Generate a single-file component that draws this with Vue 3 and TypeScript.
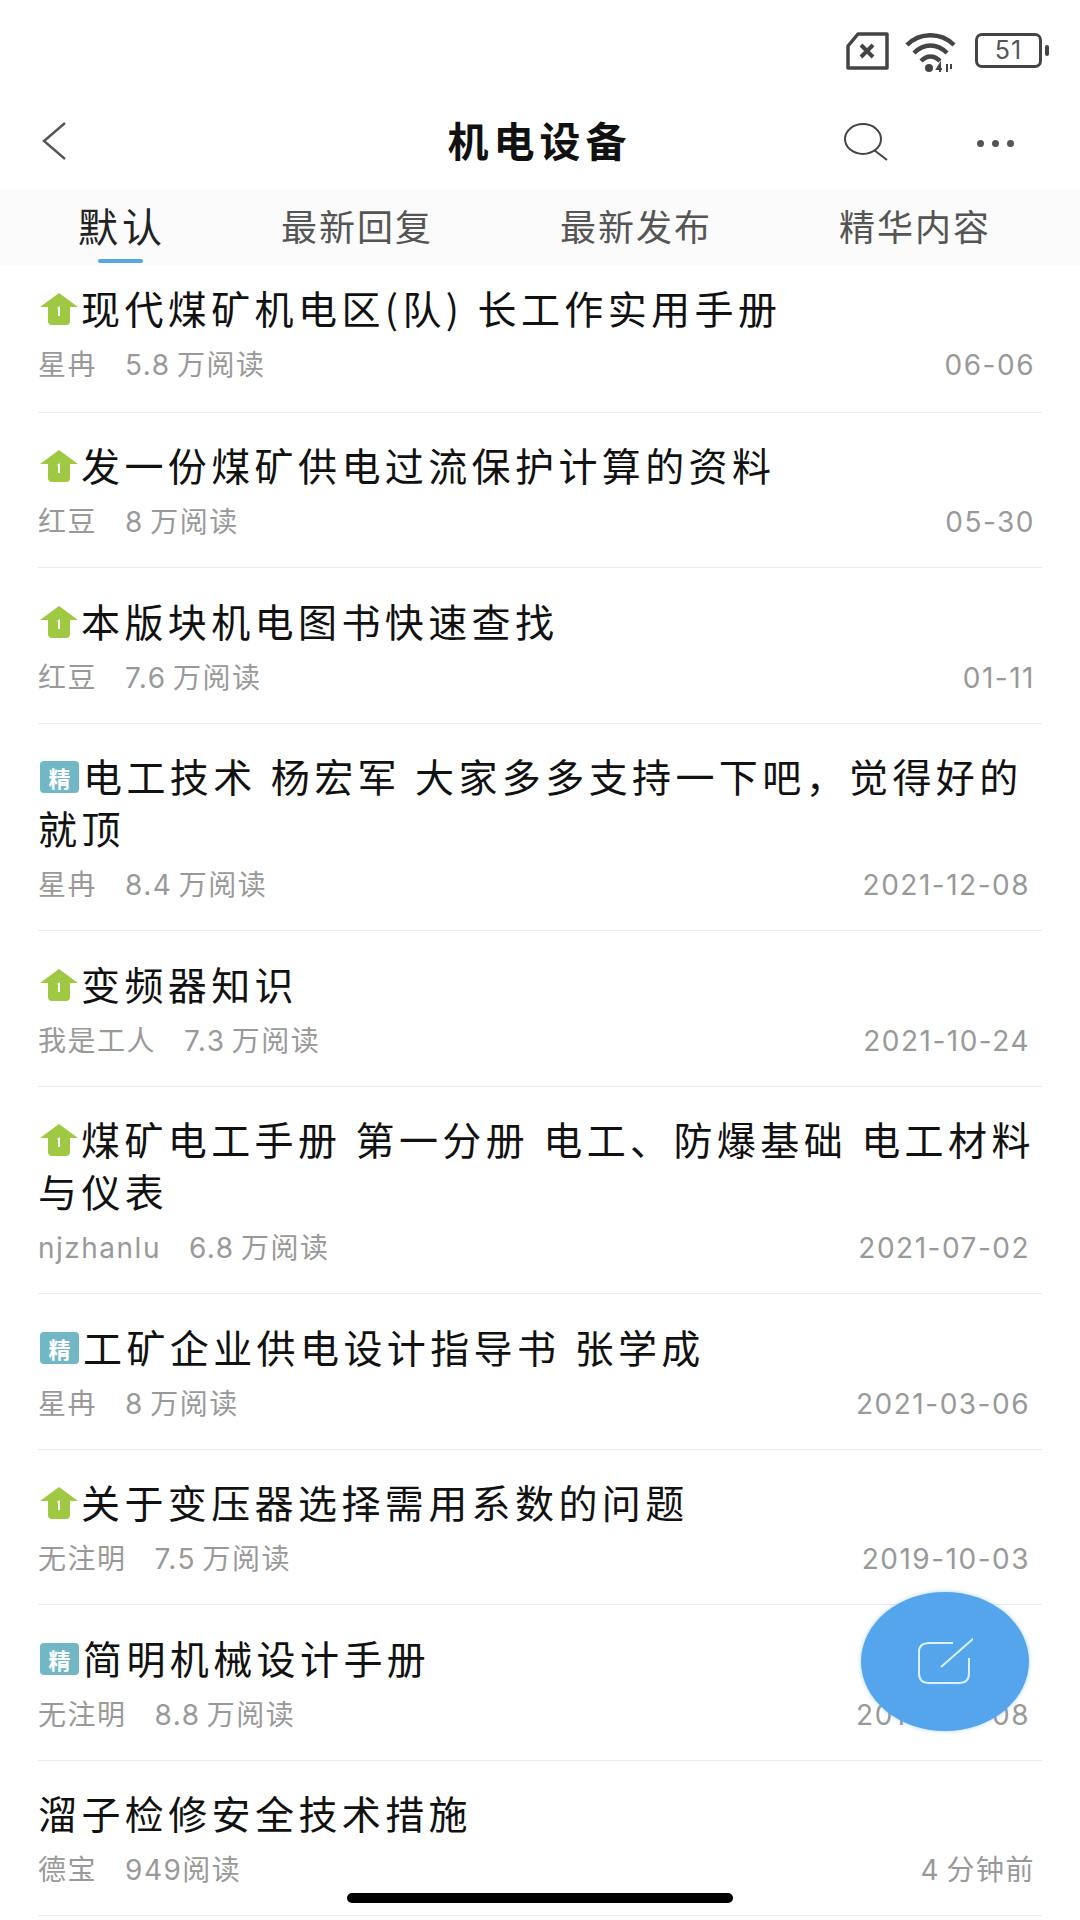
<template>
  <div class="page">
    <div class="status">
      <svg class="ic-sim" width="46" height="40" viewBox="0 0 46 40">
        <path d="M14 3H43V37H4V15Z" fill="none" stroke="#444" stroke-width="3.5" stroke-linejoin="round" />
        <path d="M17 14L29 26M29 14L17 26" stroke="#444" stroke-width="4" />
      </svg>
      <svg class="ic-wifi" width="54" height="44" viewBox="0 0 54 44">
        <path d="M3 14C16 1 37 1 50 14M10 22C20 12 33 12 43 22M17 30C23 24 30 24 36 30" fill="none" stroke="#444" stroke-width="4.5" />
        <circle cx="25" cy="37" r="4" fill="#444" />
        <path d="M36 41V33L33 38H38M43 33V41M47 33V38" fill="none" stroke="#444" stroke-width="2" />
      </svg>
      <div class="battery"><span class="battery-num">51</span></div>
      <span class="battery-tip"></span>
    </div>

    <header class="nav">
      <svg class="ic-back" width="30" height="40" viewBox="0 0 30 40">
        <path d="M25 2L4 20L25 38" fill="none" stroke="#555" stroke-width="2.4" />
      </svg>
      <h1 class="nav-title">机电设备</h1>
      <svg class="ic-search" width="48" height="44" viewBox="0 0 48 44">
        <ellipse cx="20" cy="17" rx="18" ry="15" fill="none" stroke="#444" stroke-width="2" />
        <path d="M31 28L44 38" stroke="#444" stroke-width="2" />
      </svg>
      <div class="dots"><i></i><i></i><i></i></div>
    </header>

    <nav class="tabs">
      <span class="tab active">默认</span>
      <span v-for="t in tabs" :key="t" class="tab">{{ t }}</span>
    </nav>

    <ul class="list">
      <li v-for="item in items" :key="item.title" class="row">
        <div class="title">
          <svg v-if="item.tag === 'top'" class="ic-top" width="38" height="32" viewBox="0 0 38 32">
            <path d="M19 0L38 14H30V28Q30 32 26 32H12Q8 32 8 28V14H0Z" fill="#9fc943" />
            <path d="M17 15L20 13V23H18V16Z" fill="#fff" />
          </svg>
          <span v-else-if="item.tag === 'best'" class="badge">精</span>{{ item.title }}
        </div>
        <div class="meta">
          <span class="author">{{ item.author }}</span>
          <span class="reads">{{ item.reads }}阅读</span>
          <span class="date" :class="{ short: item.date.length <= 5 }">{{ item.date }}</span>
        </div>
      </li>
    </ul>

    <button class="fab">
      <svg width="56" height="50" viewBox="0 0 56 50">
        <path d="M36 6H12Q2 6 2 15V36Q2 46 12 46H42Q52 46 52 36V21" fill="none" stroke="#d9f0ff" stroke-width="2" />
        <path d="M24 30L57 1" stroke="#d9f0ff" stroke-width="2" />
      </svg>
    </button>
    <div class="home-bar"></div>
  </div>
</template>

<script setup lang="ts">
interface Item {
  tag?: 'top' | 'best'
  title: string
  author: string
  reads: string
  date: string
}

const tabs = ['最新回复', '最新发布', '精华内容']

const items: Item[] = [
  { tag: 'top', title: '现代煤矿机电区(队) 长工作实用手册', author: '星冉', reads: '5.8 万', date: '06-06' },
  { tag: 'top', title: '发一份煤矿供电过流保护计算的资料', author: '红豆', reads: '8 万', date: '05-30' },
  { tag: 'top', title: '本版块机电图书快速查找', author: '红豆', reads: '7.6 万', date: '01-11' },
  { tag: 'best', title: '电工技术 杨宏军 大家多多支持一下吧，觉得好的就顶', author: '星冉', reads: '8.4 万', date: '2021-12-08' },
  { tag: 'top', title: '变频器知识', author: '我是工人', reads: '7.3 万', date: '2021-10-24' },
  { tag: 'top', title: '煤矿电工手册 第一分册 电工、防爆基础 电工材料与仪表', author: 'njzhanlu', reads: '6.8 万', date: '2021-07-02' },
  { tag: 'best', title: '工矿企业供电设计指导书 张学成', author: '星冉', reads: '8 万', date: '2021-03-06' },
  { tag: 'top', title: '关于变压器选择需用系数的问题', author: '无注明', reads: '7.5 万', date: '2019-10-03' },
  { tag: 'best', title: '简明机械设计手册', author: '无注明', reads: '8.8 万', date: '2019-05-08' },
  { title: '溜子检修安全技术措施', author: '德宝', reads: '949', date: '4 分钟前' },
]
</script>

<style>
html,
body {
  margin: 0;
  background: #fff;
}
</style>

<style scoped>
.page {
  position: relative;
  width: 1080px;
  height: 1920px;
  overflow: hidden;
  background: #fff;
  font-family: "Noto Sans CJK SC", "Liberation Sans", sans-serif;
  color: #111;
}

.status {
  height: 100px;
  display: flex;
  align-items: flex-start;
  justify-content: flex-end;
  padding: 31px 31px 0 0;
  box-sizing: border-box;
}

.ic-sim {
  margin-right: 14px;
}

.ic-wifi {
  margin-right: 17px;
}

.battery {
  width: 67px;
  height: 35px;
  margin-top: 2px;
  box-sizing: border-box;
  border: 3px solid #444;
  border-radius: 7px;
  display: flex;
  align-items: center;
  justify-content: center;
}

.battery-num {
  font-family: Inter, sans-serif;
  font-size: 25px;
  line-height: 1;
  letter-spacing: 1px;
  color: #555;
}

.battery-tip {
  width: 4px;
  height: 11px;
  margin: 14px 0 0 3px;
  background: #444;
  border-radius: 2px;
}

.nav {
  height: 90px;
  display: flex;
  align-items: center;
  padding: 0 66px 8px 40px;
  box-sizing: border-box;
}

.nav-title {
  flex: 1;
  margin: 0 0 5px;
  padding-left: 166px;
  text-align: center;
  font-size: 41px;
  font-weight: 700;
  letter-spacing: 5px;
  line-height: 56px;
}

.ic-search {
  margin: 6px 86px 0 0;
}

.dots {
  display: flex;
  gap: 8px;
  margin-top: 4px;
}

.dots i {
  width: 7px;
  height: 7px;
  border-radius: 50%;
  background: #555;
}

.tabs {
  height: 75px;
  background: #fbfbfb;
  display: flex;
  gap: 127px;
  padding: 0 0 0 78px;
  box-sizing: border-box;
}

.tab {
  font-size: 36px;
  letter-spacing: 2px;
  line-height: 70px;
  color: #555;
  white-space: nowrap;
}

.tab.active {
  position: relative;
  font-size: 40px;
  letter-spacing: 4px;
  color: #222;
  margin-right: -12px;
}

.tab.active::after {
  content: "";
  position: absolute;
  left: 20px;
  top: 69px;
  width: 45px;
  height: 4px;
  border-radius: 2px;
  background: #5aa6e0;
}

.list {
  list-style: none;
  margin: 0 38px;
  padding: 0;
}

.row {
  padding: 25.5px 0 28px;
  border-bottom: 1px solid #ececec;
}

.row:first-child {
  padding-top: 16px;
  padding-bottom: 29.5px;
}

.title {
  font-size: 39px;
  line-height: 52px;
  letter-spacing: 4.4px;
  word-spacing: 1px;
  color: #111;
}

.ic-top {
  vertical-align: -1px;
  margin: 0 3px 0 2px;
}

.badge {
  display: inline-block;
  width: 39px;
  height: 32px;
  margin: 0 4px 0 2px;
  border-radius: 4px;
  background: #72b7c6;
  color: #fff;
  font-size: 22px;
  font-weight: 700;
  line-height: 32px;
  letter-spacing: 0;
  text-align: center;
  vertical-align: 5px;
}

.meta {
  margin-top: 15px;
  display: flex;
  font-family: Inter, "Noto Sans CJK SC", sans-serif;
  font-size: 28px;
  line-height: 34px;
  letter-spacing: 1.5px;
  word-spacing: -3px;
  color: #999;
}

.author {
  margin-right: 28px;
}

.date {
  margin-left: auto;
  padding-right: 12px;
}

.date.short {
  padding-right: 7px;
}

.fab {
  position: absolute;
  left: 861px;
  top: 1592px;
  width: 168px;
  height: 139px;
  padding: 0;
  border: none;
  border-radius: 50%;
  background: #55a5ec;
  box-shadow: 0 0 4px rgba(85, 165, 236, 0.5);
  display: flex;
  align-items: center;
  justify-content: center;
}

.home-bar {
  position: absolute;
  left: 347px;
  top: 1893px;
  width: 386px;
  height: 10px;
  border-radius: 5px;
  background: #000;
}
</style>
